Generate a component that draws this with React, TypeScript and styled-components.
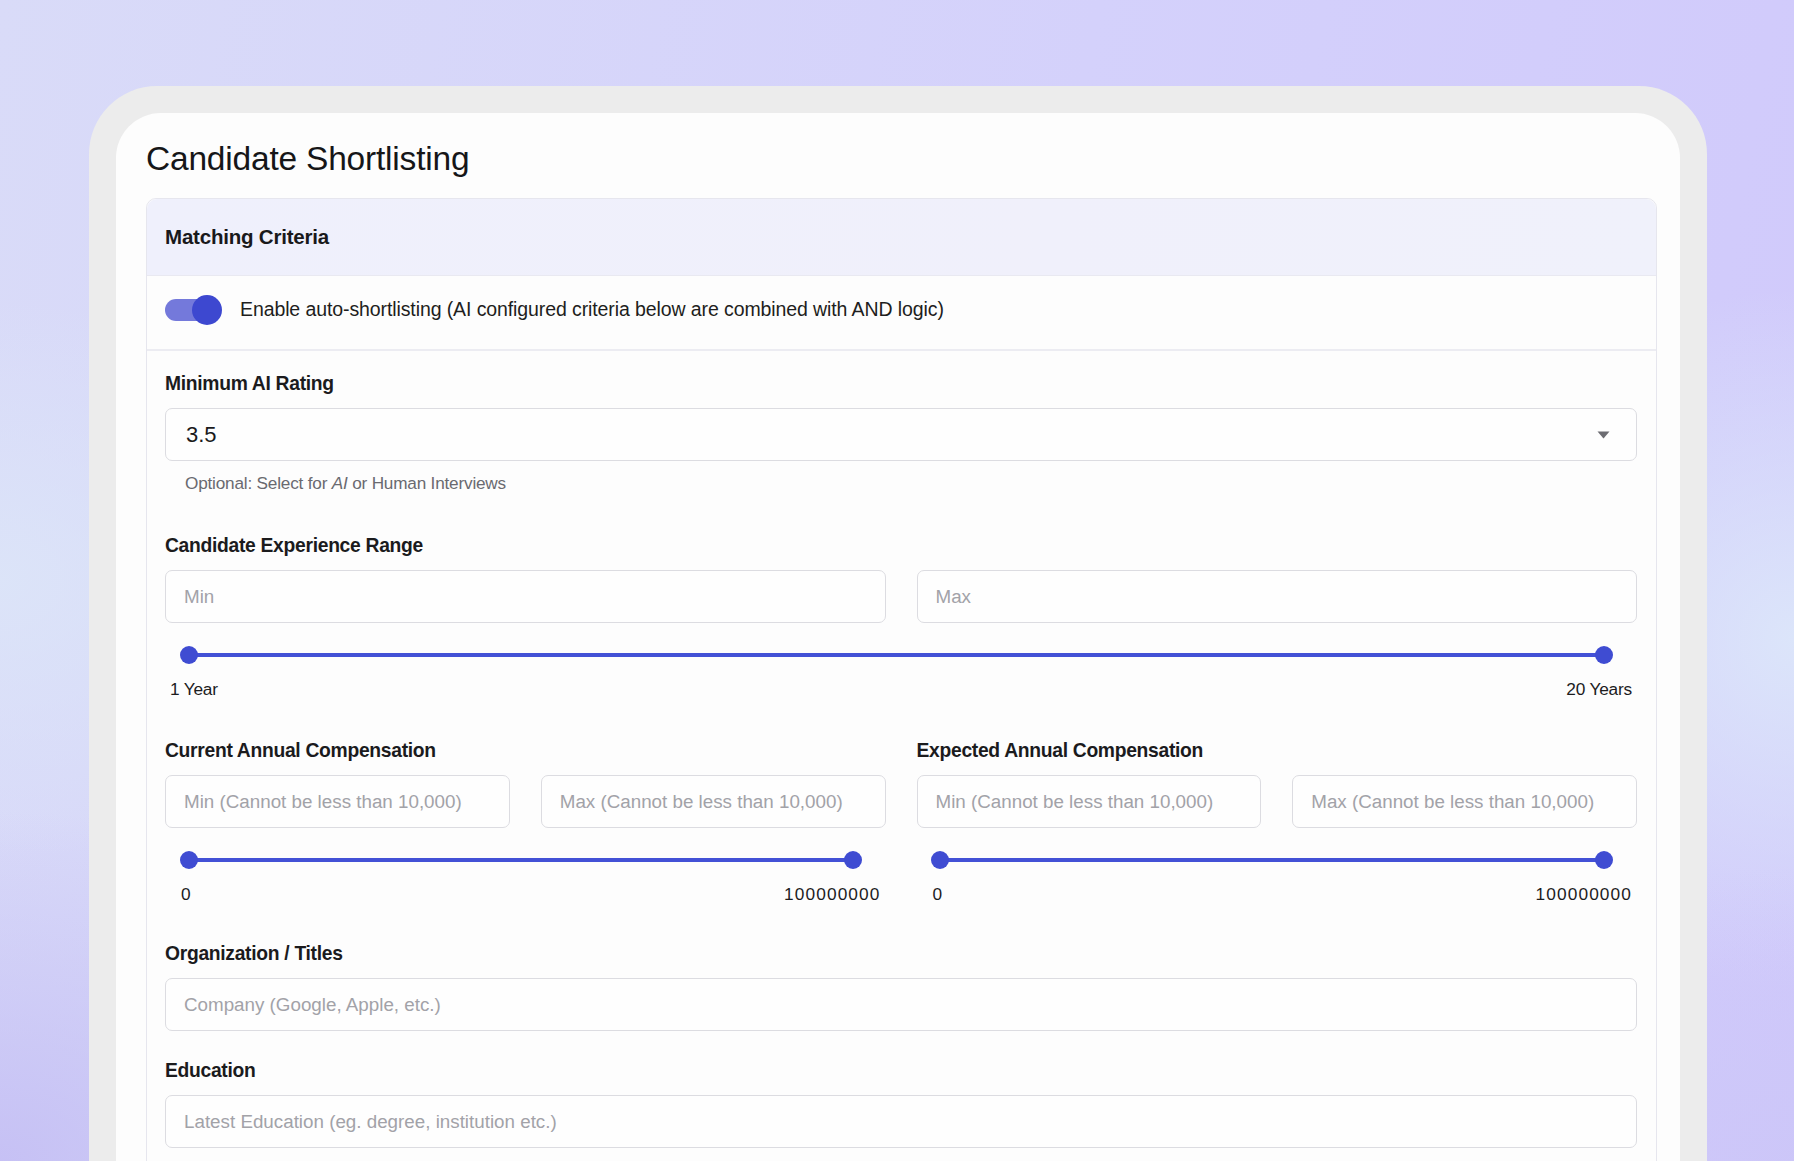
import React from 'react';
import styled, { createGlobalStyle } from 'styled-components';

const GlobalStyle = createGlobalStyle`
  html, body {
    margin: 0;
    padding: 0;
  }
  body {
    font-family: "Liberation Sans", Arial, sans-serif;
    color: #1b1b1d;
  }
  * {
    box-sizing: border-box;
  }
`;

const Page = styled.div`
  width: 1794px;
  height: 1161px;
  overflow: hidden;
  padding: 86px 0 0 89px;
  background:
    radial-gradient(ellipse 700px 500px at 0% 100%, rgba(196, 190, 244, 0.9), rgba(196, 190, 244, 0) 70%),
    radial-gradient(ellipse 600px 420px at 100% 100%, rgba(204, 198, 248, 0.9), rgba(204, 198, 248, 0) 70%),
    radial-gradient(ellipse 500px 500px at 100% 55%, rgba(221, 232, 250, 0.9), rgba(221, 232, 250, 0) 70%),
    radial-gradient(ellipse 500px 400px at 0% 50%, rgba(220, 229, 248, 0.9), rgba(220, 229, 248, 0) 70%),
    linear-gradient(100deg, #d9dbf8 0%, #d4d1fb 55%, #d0c9fb 100%);
`;

const Frame = styled.div`
  width: 1618px;
  min-height: 1100px;
  background: #ececec;
  border-radius: 68px 68px 0 0;
  padding: 27px 27px 0;
`;

const Card = styled.div`
  background: #fdfdfd;
  border-radius: 45px 45px 0 0;
  min-height: 1060px;
  padding: 26px 23px 0 30px;
`;

const Title = styled.h1`
  margin: 0 0 19px;
  font-size: 33.5px;
  line-height: 40px;
  font-weight: 400;
  color: #161618;
  letter-spacing: -0.2px;
`;

const Panel = styled.section`
  border: 1px solid #e6e6ee;
  border-radius: 10px 10px 0 0;
  background: #fdfdfd;
`;

const PanelHeader = styled.div`
  height: 77px;
  display: flex;
  align-items: center;
  padding-left: 18px;
  border-radius: 10px 10px 0 0;
  background: linear-gradient(90deg, #eff0fc 0%, #f0f0fb 60%, #f0f1fb 100%);
  border-bottom: 1px solid #e9e9f1;
  font-size: 20.5px;
  font-weight: 700;
  color: #19191b;
  letter-spacing: -0.2px;
`;

const ToggleRow = styled.div`
  height: 75px;
  display: flex;
  align-items: center;
  padding: 0 0 6px 18px;
  border-bottom: 2px solid #ececf2;
  gap: 18px;
`;

const Switch = styled.div`
  position: relative;
  width: 52px;
  height: 22px;
  border-radius: 11px;
  background: #7479db;
  margin-right: 5px;
`;

const Knob = styled.div`
  position: absolute;
  right: -5px;
  top: 50%;
  width: 30px;
  height: 30px;
  margin-top: -15px;
  border-radius: 50%;
  background: #3d48d0;
`;

const ToggleText = styled.span`
  font-size: 19.5px;
  color: #1e1e20;
  letter-spacing: -0.1px;
`;

const Body = styled.div`
  padding: 22px 19px 40px 18px;
`;

const Field = styled.div<{ $gap?: number }>`
  margin-bottom: ${(p) => p.$gap ?? 0}px;
`;

const Label = styled.div`
  font-size: 19.3px;
  line-height: 22px;
  font-weight: 700;
  color: #1b1b1d;
  margin-bottom: 13px;
  letter-spacing: -0.3px;
`;

const Input = styled.input`
  display: block;
  width: 100%;
  height: 53px;
  border: 1.5px solid #dcdce1;
  border-radius: 7px;
  background: #fefefe;
  padding: 0 18px;
  font-family: "Liberation Sans", Arial, sans-serif;
  font-size: 18.8px;
  color: #1b1b1d;
  outline: none;

  &::placeholder {
    color: #a2a2a8;
  }
`;

const Select = styled.div`
  height: 53px;
  border: 1.5px solid #dcdce1;
  border-radius: 7px;
  background: #fefefe;
  display: flex;
  align-items: center;
  justify-content: space-between;
  padding: 0 26px 0 20px;
  font-size: 22px;
  color: #1a1a1c;
`;

const Helper = styled.div`
  margin-top: 12px;
  padding-left: 20px;
  font-size: 17.2px;
  line-height: 20px;
  color: #6a6a70;
  letter-spacing: -0.2px;
`;

const TwoCols = styled.div`
  display: grid;
  grid-template-columns: 1fr 1fr;
  column-gap: 31px;
`;

const SliderWrap = styled.div<{ $left: number; $right: number }>`
  height: 24px;
  margin: 20px ${(p) => p.$right}px 0 ${(p) => p.$left}px;
  display: flex;
  align-items: center;
`;

const Track = styled.div`
  position: relative;
  flex: 1;
  height: 4px;
  border-radius: 2px;
  background: #4351d6;
`;

const Thumb = styled.span<{ $end?: boolean }>`
  position: absolute;
  top: 50%;
  left: ${(p) => (p.$end ? '100%' : '0')};
  width: 18px;
  height: 18px;
  border-radius: 50%;
  background: #3f4cd2;
  transform: translate(-50%, -50%);
`;

const RangeLabels = styled.div<{ $left: number; $right: number; $spread?: boolean }>`
  display: flex;
  justify-content: space-between;
  margin-top: 12px;
  padding: 0 ${(p) => p.$right}px 0 ${(p) => p.$left}px;
  font-size: 17.3px;
  line-height: 20px;
  color: #1c1c1e;
  letter-spacing: ${(p) => (p.$spread ? '1.1px' : '-0.2px')};
`;

const Caret = () => (
  <svg width="13" height="8" viewBox="0 0 13 8">
    <path d="M0.5 0.5 L12.5 0.5 L6.5 7.5 Z" fill="#6c6c72" />
  </svg>
);

type RangeProps = {
  min: string;
  max: string;
  left: number;
  right: number;
  labelLeft: number;
  labelRight: number;
  spread?: boolean;
};

const Range = ({ min, max, left, right, labelLeft, labelRight, spread }: RangeProps) => (
  <>
    <SliderWrap $left={left} $right={right}>
      <Track>
        <Thumb />
        <Thumb $end />
      </Track>
    </SliderWrap>
    <RangeLabels $left={labelLeft} $right={labelRight} $spread={spread}>
      <span>{min}</span>
      <span>{max}</span>
    </RangeLabels>
  </>
);

const CompField = ({ title, left }: { title: string; left: number }) => (
  <div>
    <Label>{title}</Label>
    <TwoCols>
      <Input placeholder="Min (Cannot be less than 10,000)" />
      <Input placeholder="Max (Cannot be less than 10,000)" />
    </TwoCols>
    <Range min="0" max="100000000" left={left} right={33} labelLeft={16} labelRight={5} spread />
  </div>
);

export default function App() {
  return (
    <Page>
      <GlobalStyle />
      <Frame>
        <Card>
          <Title>Candidate Shortlisting</Title>
          <Panel>
            <PanelHeader>Matching Criteria</PanelHeader>
            <ToggleRow>
              <Switch>
                <Knob />
              </Switch>
              <ToggleText>
                Enable auto-shortlisting (AI configured criteria below are combined with AND logic)
              </ToggleText>
            </ToggleRow>
            <Body>
              <Field $gap={42}>
                <Label>Minimum AI Rating</Label>
                <Select>
                  <span>3.5</span>
                  <Caret />
                </Select>
                <Helper>
                  Optional: Select for <i>AI</i> or Human Interviews
                </Helper>
              </Field>

              <Field $gap={41}>
                <Label>Candidate Experience Range</Label>
                <TwoCols>
                  <Input placeholder="Min" />
                  <Input placeholder="Max" />
                </TwoCols>
                <Range min="1 Year" max="20 Years" left={24} right={33} labelLeft={5} labelRight={5} />
              </Field>

              <Field $gap={39}>
                <TwoCols>
                  <CompField title="Current Annual Compensation" left={24} />
                  <CompField title="Expected Annual Compensation" left={23} />
                </TwoCols>
              </Field>

              <Field $gap={29}>
                <Label>Organization / Titles</Label>
                <Input placeholder="Company (Google, Apple, etc.)" />
              </Field>

              <Field>
                <Label>Education</Label>
                <Input placeholder="Latest Education (eg. degree, institution etc.)" />
              </Field>
            </Body>
          </Panel>
        </Card>
      </Frame>
    </Page>
  );
}
